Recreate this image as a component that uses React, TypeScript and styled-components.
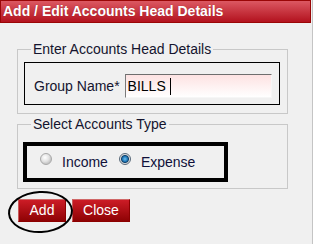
import React from "react";
import styled, { createGlobalStyle } from "styled-components";

const GlobalStyle = createGlobalStyle`
  html, body {
    margin: 0;
    padding: 0;
    background: #f0f0f0;
  }
  body {
    font-family: Arial, "Liberation Sans", sans-serif;
  }
`;

// Styled Components

const Panel = styled.div`
  width: 312px;
  height: 244px;
  background: #f0f0f0;
  border-right: 1px solid #c4c4c4;
`;

const Header = styled.div`
  width: 307px;
  height: 21px;
  padding-left: 2px;
  border: 1px solid #9a0606;
  background: linear-gradient(#dc5862, #b3121e);
  color: #ffffff;
  font-size: 14px;
  font-weight: bold;
  line-height: 21px;
  text-shadow: 0 0 1px rgba(80, 0, 0, 0.4);
`;

const Body = styled.div`
  padding-left: 17px;
`;

const FieldSet = styled.fieldset<{ $top: number; $pad: string }>`
  margin: ${(p) => p.$top}px 0 0 0;
  padding: ${(p) => p.$pad};
  width: 271px;
  box-sizing: border-box;
  border: 1px solid #c8c8c8;
  min-inline-size: 0;
`;

const Legend = styled.legend<{ $indent: number }>`
  margin-left: ${(p) => p.$indent}px;
  padding: 0 2px;
  font-size: 14px;
  line-height: 16px;
  color: #14142e;
`;

const NameBox = styled.div`
  width: 256px;
  height: 43px;
  box-sizing: border-box;
  border: 1px solid #000;
  padding: 11px 7px 6px 9px;
  display: flex;
  align-items: center;
`;

const Label = styled.span`
  font-size: 14px;
  color: #14142e;
  margin-right: 5px;
  white-space: nowrap;
`;

const InputBox = styled.div`
  flex: 1;
  height: 24px;
  box-sizing: border-box;
  border-top: 1px solid #6e6e6e;
  border-left: 1px solid #7a7a7a;
  border-bottom: 1px solid #f6f6f6;
  border-right: 1px solid #f6f6f6;
  background: linear-gradient(#fde2e2, #ffffff);
  font-size: 14px;
  color: #000;
  padding-left: 2px;
  display: flex;
  align-items: center;
`;

const Caret = styled.span`
  display: inline-block;
  width: 1px;
  height: 17px;
  background: #000;
  margin-left: 4px;
`;

const TypeBox = styled.div`
  width: 205px;
  height: 40px;
  box-sizing: border-box;
  border: 4px solid #000;
  padding-left: 13px;
  display: flex;
  align-items: center;
`;

const Radio = styled.span<{ $checked?: boolean }>`
  width: 12px;
  height: 12px;
  box-sizing: border-box;
  border-radius: 50%;
  border: 1px solid ${(p) => (p.$checked ? "#5a6a7a" : "#a8a8a8")};
  background: ${(p) =>
    p.$checked
      ? "radial-gradient(circle at 50% 50%, #6fc0f0 0, #1f78b8 2.5px, #10406a 3.5px, #dcdcdc 4.5px, #f6f6f6 6px)"
      : "radial-gradient(circle at 40% 35%, #ffffff 0, #e2e2e2 4px, #c8c8c8 6px)"};
  margin-bottom: 7px;
  flex: none;
`;

const RadioText = styled.span<{ $gap?: number }>`
  font-size: 14px;
  color: #10103a;
  margin-left: 10px;
  margin-right: ${(p) => p.$gap ?? 0}px;
`;

const Buttons = styled.div`
  display: flex;
  gap: 6px;
  margin: 10px 0 0 1px;
`;

const Circled = styled.div`
  position: relative;
  display: flex;
`;

// hand-drawn ring marking the Add button
const Ellipse = styled.span`
  position: absolute;
  left: -10px;
  top: -8px;
  width: 61px;
  height: 38px;
  border: 2px solid #000;
  border-radius: 50%;
  transform: rotate(-3deg);
  pointer-events: none;
`;

const Button = styled.button<{ $w: number }>`
  width: ${(p) => p.$w}px;
  height: 23px;
  margin: 0;
  padding: 0;
  border: 1px solid #8c0000;
  border-top-color: #d06868;
  border-left-color: #c85a5a;
  background: linear-gradient(#cc1c26, #8e0204);
  color: #ffffff;
  font-family: Arial, "Liberation Sans", sans-serif;
  font-size: 14px;
  line-height: 21px;
  cursor: pointer;
`;

function App() {
  return (
    <Panel>
      <GlobalStyle />
      <Header>Add / Edit Accounts Head Details</Header>
      <Body>
        <FieldSet $top={18} $pad="5px 7px 8px 6px">
          <Legend $indent={7}>Enter Accounts Head Details</Legend>
          <NameBox>
            <Label>Group Name*</Label>
            <InputBox>
              BILLS
              <Caret />
            </InputBox>
          </NameBox>
        </FieldSet>
        <FieldSet $top={2} $pad="10px 7px 6px 5px">
          <Legend $indent={8}>Select Accounts Type</Legend>
          <TypeBox>
            <Radio />
            <RadioText $gap={11}>Income</RadioText>
            <Radio $checked />
            <RadioText>Expense</RadioText>
          </TypeBox>
        </FieldSet>
        <Buttons>
          <Circled>
            <Ellipse />
            <Button $w={48}>Add</Button>
          </Circled>
          <Button $w={58}>Close</Button>
        </Buttons>
      </Body>
    </Panel>
  );
}

export default App;
